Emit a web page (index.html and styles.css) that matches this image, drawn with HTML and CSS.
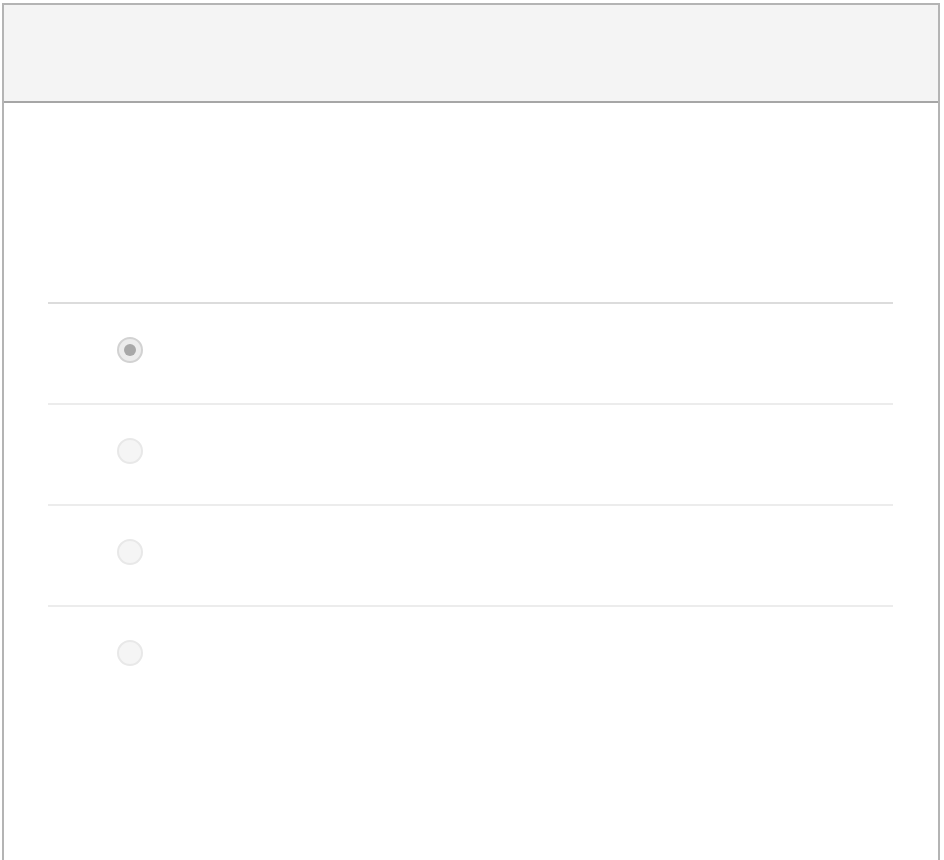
FILE: index.html
```html
<!DOCTYPE html>
<html>
<head>
<meta charset="utf-8">
<link rel="stylesheet" href="styles.css">
</head>
<body>
<div class="frame">
  <header class="topbar"></header>
  <main class="content">
    <ul class="options">
      <li class="option first"><input type="radio" name="opt" class="radio" checked></li>
      <li class="option"><input type="radio" name="opt" class="radio"></li>
      <li class="option"><input type="radio" name="opt" class="radio"></li>
      <li class="option"><input type="radio" name="opt" class="radio"></li>
    </ul>
  </main>
</div>
</body>
</html>
```
FILE: styles.css
```css
html, body {
  margin: 0;
  padding: 0;
  background: #ffffff;
  font-family: "Liberation Sans", Arial, sans-serif;
}
.frame {
  margin: 3px 0 0 2px;
  width: 938px;
  height: 857px;
  box-sizing: border-box;
  border: 2px solid #b4b4b4;
  border-bottom: none;
  background: #ffffff;
}
.topbar {
  height: 96px;
  background: #f4f4f4;
  border-bottom: 2px solid #a6a6a6;
}
.content {
  padding: 199px 45px 0 44px;
}
.options {
  list-style: none;
  margin: 0;
  padding: 0;
}
.option {
  border-top: 2px solid #ececec;
  padding: 33px 0 0 69px;
  box-sizing: content-box;
  height: 66px;
}
.option.first {
  border-top-color: #dcdcdc;
}
.radio {
  -webkit-appearance: none;
  appearance: none;
  display: block;
  margin: 0;
  width: 26px;
  height: 26px;
  box-sizing: border-box;
  border-radius: 50%;
  border: 2px solid #e8e8e8;
  background: #f5f5f5;
  position: relative;
}
.radio:checked {
  border-color: #d2d2d2;
  background: #ececec;
}
.radio:checked::after {
  content: "";
  position: absolute;
  left: 5px;
  top: 5px;
  width: 12px;
  height: 12px;
  border-radius: 50%;
  background: #a8a8a8;
}
```
